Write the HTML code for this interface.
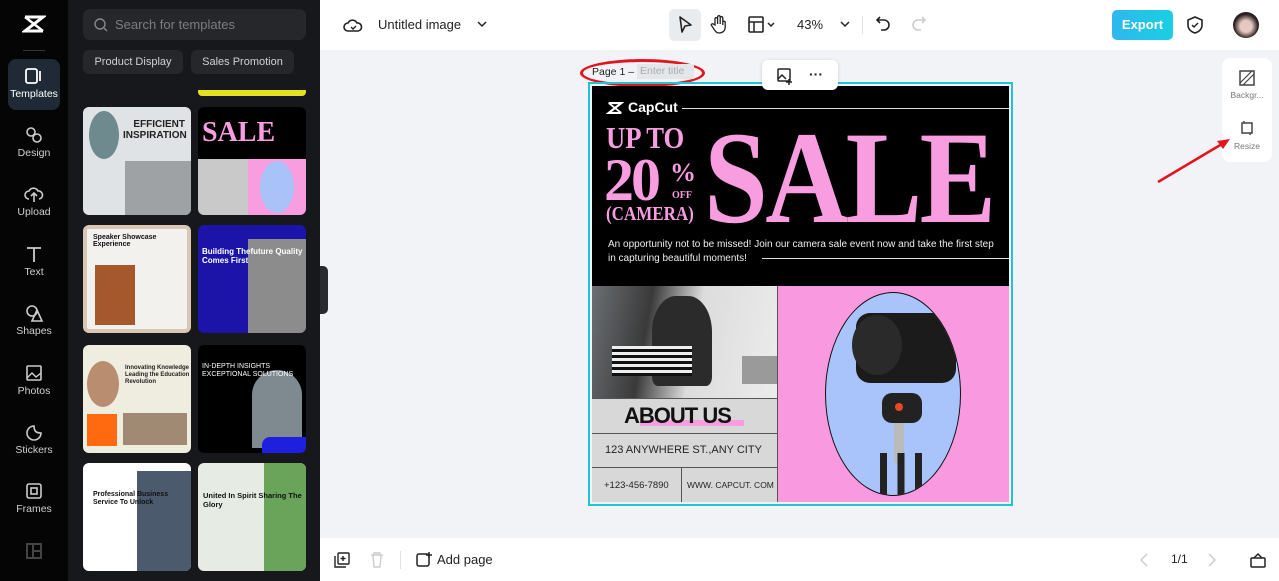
<!DOCTYPE html>
<html><head><meta charset="utf-8"><style>
*{margin:0;padding:0;box-sizing:border-box}
body{width:1279px;height:581px;overflow:hidden;position:relative;font-family:"Liberation Sans",sans-serif;background:#f1f3f6}
.abs{position:absolute}
.rail{left:0;top:0;width:68px;height:581px;background:#050505}
.ri{position:absolute;left:8px;width:52px;height:52px;color:#cfd0d3;font-size:10.5px;text-align:center}
.ri svg{display:block;margin:8px auto 3px}
.panel{left:68px;top:0;width:252px;height:581px;background:#17181b}
.th{position:absolute;width:108px;height:108px;border-radius:6px;overflow:hidden}
.top{left:320px;top:0;width:959px;height:50px;background:#fff}
.bot{left:320px;top:538px;width:959px;height:43px;background:#fff}
.serif{font-family:"Liberation Serif",serif;font-weight:bold;color:#f79de0}
</style></head><body>
<div class="abs rail">
  <svg class="abs" style="left:22px;top:14px" width="24" height="20" viewBox="0 0 24 20"><path d="M3 3h18L3 17h18" stroke="#fff" stroke-width="3" fill="none"/><path d="M3 3l18 14M21 3L3 17" stroke="#fff" stroke-width="2.4"/></svg>
  <div class="abs" style="left:23px;top:50px;width:22px;height:1px;background:#333"></div>
  <div class="ri" style="top:59px;height:51px;background:#1f2a36;border-radius:8px;color:#fff"><svg width="20" height="18"><rect x="2" y="2" width="11" height="14" rx="2" stroke="#fff" stroke-width="1.8" fill="none"/><path d="M16 4v10" stroke="#fff" stroke-width="1.8"/></svg>Templates</div>
  <div class="ri" style="top:118px"><svg width="20" height="18"><circle cx="7" cy="6" r="4" stroke="#ccc" stroke-width="1.6" fill="none"/><circle cx="13" cy="12" r="4" stroke="#ccc" stroke-width="1.6" fill="none"/></svg>Design</div>
  <div class="ri" style="top:177px"><svg width="20" height="18"><path d="M5 14a4 4 0 010-8 5 5 0 019 0 4 4 0 011 8M10 8v9M7 11l3-3 3 3" stroke="#ccc" stroke-width="1.6" fill="none"/></svg>Upload</div>
  <div class="ri" style="top:237px"><svg width="20" height="18"><path d="M3 3h14M10 3v14" stroke="#ccc" stroke-width="1.8" fill="none"/></svg>Text</div>
  <div class="ri" style="top:296px"><svg width="20" height="18"><circle cx="8" cy="7" r="5" stroke="#ccc" stroke-width="1.6" fill="none"/><path d="M13 6l5 11H8z" stroke="#ccc" stroke-width="1.6" fill="none"/></svg>Shapes</div>
  <div class="ri" style="top:356px"><svg width="20" height="18"><rect x="3" y="2" width="14" height="14" rx="1" stroke="#ccc" stroke-width="1.6" fill="none"/><path d="M3 14l5-5 4 4 5-4" stroke="#ccc" stroke-width="1.4" fill="none"/></svg>Photos</div>
  <div class="ri" style="top:415px"><svg width="20" height="18"><path d="M17 10A7 7 0 1110 3c0 5 2 7 7 7z" stroke="#ccc" stroke-width="1.6" fill="none"/></svg>Stickers</div>
  <div class="ri" style="top:474px"><svg width="20" height="18"><rect x="3" y="2" width="14" height="14" rx="2" stroke="#ccc" stroke-width="1.6" fill="none"/><rect x="7" y="6" width="6" height="6" stroke="#ccc" stroke-width="1.6" fill="none"/></svg>Frames</div>
  <svg class="abs" style="left:26px;top:543px" width="16" height="16"><rect x="1" y="1" width="14" height="14" stroke="#444" stroke-width="2" fill="none"/><path d="M7 1v14M7 8h8" stroke="#444" stroke-width="2"/></svg>
</div>
<div class="abs panel">
  <div class="abs" style="left:15px;top:9px;width:223px;height:31px;background:#26272b;border-radius:7px;color:#7c7e84;font-size:13px;line-height:31px;padding-left:32px">Search for templates
    <svg class="abs" style="left:11px;top:9px" width="14" height="14"><circle cx="6" cy="6" r="5" stroke="#888" stroke-width="1.4" fill="none"/><path d="M10 10l3 3" stroke="#888" stroke-width="1.4"/></svg></div>
  <div class="abs" style="left:15px;top:50px;width:100px;height:24px;background:#26272b;border-radius:6px;color:#d0d1d4;font-size:11px;line-height:24px;text-align:center">Product Display</div>
  <div class="abs" style="left:123px;top:50px;width:103px;height:24px;background:#26272b;border-radius:6px;color:#d0d1d4;font-size:11px;line-height:24px;text-align:center">Sales Promotion</div>
  <div class="abs" style="left:130px;top:90px;width:108px;height:6px;background:#e6e022;border-radius:0 0 4px 4px"></div>
  <div class="th" style="left:15px;top:107px;background:#dfe3e5"><div class="abs" style="left:6px;top:4px;width:30px;height:48px;border-radius:50%;background:#6f8a8f"></div><div class="abs" style="left:40px;top:12px;font-size:10px;font-weight:bold;color:#222;line-height:11px;text-align:right;width:62px">EFFICIENT INSPIRATION</div><div class="abs" style="left:42px;top:54px;width:66px;height:54px;background:#9ea2a4"></div></div>
  <div class="th" style="left:130px;top:107px;background:#000"><div class="abs serif" style="left:4px;top:10px;font-size:28px;color:#f79de0">SALE</div><div class="abs" style="left:0;top:52px;width:50px;height:56px;background:#c9c9c9"></div><div class="abs" style="left:50px;top:52px;width:58px;height:56px;background:#f79de0"></div><div class="abs" style="left:62px;top:54px;width:34px;height:52px;border-radius:50%;background:#a9c2f8"></div></div>
  <div class="th" style="left:15px;top:225px;background:#f3f1ee;border:4px solid #d9c6b3"><div class="abs" style="left:8px;top:36px;width:40px;height:60px;background:#a5582c"></div><div class="abs" style="left:6px;top:5px;font-size:7px;font-weight:bold;color:#111">Speaker Showcase Experience</div></div>
  <div class="th" style="left:130px;top:225px;background:#1c14a8"><div class="abs" style="left:50px;top:14px;width:58px;height:94px;background:#8c8c8c"></div><div class="abs" style="left:4px;top:22px;font-size:8px;font-weight:bold;color:#fff;line-height:9px">Building Thefuture Quality Comes First</div></div>
  <div class="th" style="left:15px;top:345px;background:#efece0"><div class="abs" style="left:4px;top:16px;width:32px;height:46px;border-radius:50%;background:#b88d70"></div><div class="abs" style="left:4px;top:69px;width:30px;height:32px;background:#ff6a10"></div><div class="abs" style="left:40px;top:68px;width:64px;height:32px;background:#a08a74"></div><div class="abs" style="left:42px;top:20px;font-size:6px;font-weight:bold;line-height:7px;color:#222">Innovating Knowledge Leading the Education Revolution</div></div>
  <div class="th" style="left:130px;top:345px;background:#000"><div class="abs" style="left:54px;top:25px;width:50px;height:78px;border-radius:25px 25px 0 0;background:#7f8a90"></div><div class="abs" style="left:4px;top:18px;font-size:7px;color:#fff;line-height:8px">IN-DEPTH INSIGHTS EXCEPTIONAL SOLUTIONS</div><div class="abs" style="left:64px;top:92px;width:44px;height:16px;background:#1f1fe0;border-radius:8px 0 0 0"></div></div>
  <div class="th" style="left:15px;top:463px;background:#fff"><div class="abs" style="left:54px;top:8px;width:54px;height:100px;background:#4b5a6c"></div><div class="abs" style="left:10px;top:28px;font-size:7px;font-weight:bold;line-height:8px;color:#111">Professional Business Service To Unlock</div></div>
  <div class="th" style="left:130px;top:463px;background:#e6ece4"><div class="abs" style="left:66px;top:0;width:42px;height:108px;background:#6aa35a"></div><div class="abs" style="left:5px;top:28px;font-size:7.5px;font-weight:bold;line-height:9px;color:#111">United In Spirit Sharing The Glory</div></div>
</div>
<div class="abs" style="left:320px;top:266px;width:8px;height:48px;background:#2a2b2f;border-radius:0 5px 5px 0"></div>
<div class="abs top">
  <svg class="abs" style="left:23px;top:16px" width="20" height="18"><path d="M5 15a4 4 0 010-8 5 5 0 019 0 4 4 0 011 8z" stroke="#222" stroke-width="1.6" fill="none"/><path d="M8 11l2 2 3-3" stroke="#222" stroke-width="1.4" fill="none"/></svg>
  <div class="abs" style="left:58px;top:17px;font-size:13px;color:#222">Untitled image</div>
  <svg class="abs" style="left:157px;top:20px" width="10" height="8"><path d="M1 2l4 4 4-4" stroke="#222" stroke-width="1.5" fill="none"/></svg>
  <div class="abs" style="left:349px;top:9px;width:32px;height:32px;background:#e9ecef;border-radius:5px"></div>
  <svg class="abs" style="left:356px;top:15px" width="18" height="20"><path d="M4 2l11 8-6 1-3 6z" stroke="#222" stroke-width="1.6" fill="none" stroke-linejoin="round"/></svg>
  <svg class="abs" style="left:390px;top:14px" width="18" height="20"><path d="M5 11V5a1.3 1.3 0 012.6 0v5V3a1.3 1.3 0 012.6 0v7V4a1.3 1.3 0 012.6 0v7-3a1.3 1.3 0 012.4 0v5c0 4-3 6-6 6s-4-2-6-5l-2-3a1.3 1.3 0 012-1z" stroke="#222" stroke-width="1.3" fill="none"/></svg>
  <svg class="abs" style="left:428px;top:16px" width="30" height="18"><rect x="1" y="1" width="14" height="15" rx="1" stroke="#222" stroke-width="1.6" fill="none"/><path d="M1 6h14M6 6v10M20 7l3 3 3-3" stroke="#222" stroke-width="1.5" fill="none"/></svg>
  <div class="abs" style="left:477px;top:17px;font-size:13px;color:#222">43%</div>
  <svg class="abs" style="left:520px;top:20px" width="10" height="8"><path d="M1 2l4 4 4-4" stroke="#222" stroke-width="1.5" fill="none"/></svg>
  <div class="abs" style="left:542px;top:16px;width:1px;height:18px;background:#e2e2e2"></div>
  <svg class="abs" style="left:555px;top:15px" width="16" height="18"><path d="M5 2L2 5l3 3M2 5h7a5 5 0 010 10H6" stroke="#222" stroke-width="1.6" fill="none"/></svg>
  <svg class="abs" style="left:591px;top:15px" width="16" height="18"><path d="M11 2l3 3-3 3M14 5H7a5 5 0 000 10h3" stroke="#ccc" stroke-width="1.6" fill="none"/></svg>
  <div class="abs" style="left:792px;top:10px;width:61px;height:30px;border-radius:5px;background:linear-gradient(90deg,#2fb7ef,#1bcfe1);color:#fff;font-size:13px;font-weight:bold;line-height:30px;text-align:center">Export</div>
  <svg class="abs" style="left:866px;top:15px" width="18" height="20"><path d="M9 2l7 3v5c0 4-3 7-7 8-4-1-7-4-7-8V5z" stroke="#222" stroke-width="1.6" fill="none"/><path d="M6 10l2 2 4-4" stroke="#222" stroke-width="1.5" fill="none"/></svg>
  <div class="abs" style="left:913px;top:12px;width:26px;height:26px;border-radius:50%;background:radial-gradient(circle at 50% 55%,#e6c8c0 30%,#2b2020 62%)"></div>
</div>
<!-- canvas -->
<div class="abs" style="left:580px;top:59px;width:125px;height:28px;border:3px solid #e2141c;border-radius:50%"></div>
<div class="abs" style="left:592px;top:66px;font-size:10.5px;color:#222">Page 1 –</div>
<div class="abs" style="left:637px;top:64px;width:57px;height:15px;background:#e4e7ea;font-size:10.5px;color:#a8abb0;line-height:15px;padding-left:3px">Enter title</div>
<div class="abs" style="left:588px;top:82px;width:425px;height:424px;border:2px solid #20c4d8"></div>
<div class="abs" style="left:592px;top:86px;width:417px;height:200px;background:#000;overflow:hidden">
  <svg class="abs" style="left:14px;top:15px" width="18" height="14" viewBox="0 0 24 20"><path d="M3 3h18L3 17h18" stroke="#fff" stroke-width="3" fill="none"/><path d="M3 3l18 14M21 3L3 17" stroke="#fff" stroke-width="2.4"/></svg>
  <div class="abs" style="left:36px;top:13px;font-size:14px;font-weight:bold;color:#fff">CapCut</div>
  <div class="abs" style="left:90px;top:22px;width:327px;height:1px;background:#ddd"></div>
  <div class="abs serif" style="left:14px;top:37px;font-size:31px;line-height:30px;transform:scaleX(.86);transform-origin:left">UP TO</div>
  <div class="abs serif" style="left:12px;top:64px;font-size:60px;line-height:60px;letter-spacing:-3px">20</div>
  <div class="abs serif" style="left:78px;top:72px;font-size:26px">%</div>
  <div class="abs serif" style="left:80px;top:104px;font-size:10px">OFF</div>
  <div class="abs serif" style="left:14px;top:117px;font-size:20px;transform:scaleX(.85);transform-origin:left">(CAMERA)</div>
  <div class="abs serif" style="left:112px;top:22px;font-size:132px;line-height:140px;letter-spacing:-3px;transform:scaleX(.87);transform-origin:left">SALE</div>
  <div class="abs" style="left:16px;top:152px;font-size:10px;line-height:14px;color:#eee;width:400px">An opportunity not to be missed! Join our camera sale event now and take the first step<br>in capturing beautiful moments!</div>
  <div class="abs" style="left:170px;top:172px;width:247px;height:1px;background:#ddd"></div>
</div>
<div class="abs" style="left:592px;top:286px;width:185px;height:112px;background:linear-gradient(100deg,#6b6f73 0%,#3a3a3a 30%,#dcdcdc 55%,#ececec 100%)">
  <div class="abs" style="left:60px;top:10px;width:60px;height:90px;background:#2b2b2b;border-radius:40% 40% 10% 10%"></div>
  <div class="abs" style="left:20px;top:60px;width:80px;height:30px;background:repeating-linear-gradient(0deg,#111 0 3px,#eee 3px 6px)"></div>
  <div class="abs" style="left:150px;top:70px;width:35px;height:28px;background:#9a9a9a"></div>
</div>
<div class="abs" style="left:592px;top:398px;width:185px;height:104px;background:#d8d8d8">
  <div class="abs" style="left:0;top:0;width:185px;height:1px;background:#555"></div>
  <div class="abs" style="left:48px;top:22px;width:104px;height:6px;background:#f79de0"></div>
  <div class="abs" style="left:32px;top:5px;font-size:22px;font-weight:bold;color:#111;letter-spacing:-1px">ABOUT US</div>
  <div class="abs" style="left:0;top:35px;width:185px;height:1px;background:#555"></div>
  <div class="abs" style="left:13px;top:46px;font-size:11px;color:#222;white-space:nowrap">123 ANYWHERE ST.,ANY CITY</div>
  <div class="abs" style="left:0;top:69px;width:185px;height:1px;background:#555"></div>
  <div class="abs" style="left:89px;top:69px;width:1px;height:35px;background:#555"></div>
  <div class="abs" style="left:12px;top:82px;font-size:9.5px;color:#222;white-space:nowrap">+123-456-7890</div>
  <div class="abs" style="left:95px;top:82px;font-size:8.5px;color:#222;white-space:nowrap">WWW. CAPCUT. COM</div>
</div>
<div class="abs" style="left:777px;top:286px;width:1px;height:216px;background:#555"></div>
<div class="abs" style="left:778px;top:286px;width:231px;height:216px;background:#f99ae0">
  <div class="abs" style="left:47px;top:6px;width:136px;height:204px;border-radius:50%;background:#a9c4fb;border:1px solid #111;overflow:hidden">
    <div class="abs" style="left:30px;top:20px;width:100px;height:70px;background:#1b1b1b;border-radius:14px"></div>
    <div class="abs" style="left:26px;top:22px;width:50px;height:60px;background:#2a2a2a;border-radius:50%"></div>
    <div class="abs" style="left:56px;top:100px;width:40px;height:30px;background:#222;border-radius:10px"></div>
    <div class="abs" style="left:69px;top:110px;width:8px;height:8px;background:#e74a20;border-radius:50%"></div>
    <div class="abs" style="left:68px;top:130px;width:10px;height:40px;background:#bbb"></div>
    <div class="abs" style="left:40px;top:160px;width:70px;height:44px;background:linear-gradient(90deg,transparent 20%,#222 20% 30%,transparent 30% 45%,#222 45% 55%,transparent 55% 70%,#222 70% 80%,transparent 80%)"></div>
  </div>
</div>
<div class="abs" style="left:762px;top:60px;width:76px;height:30px;background:#fff;border-radius:6px;box-shadow:0 1px 4px rgba(0,0,0,.15)">
  <svg class="abs" style="left:14px;top:7px" width="18" height="18"><rect x="2" y="2" width="12" height="12" rx="1" stroke="#222" stroke-width="1.5" fill="none"/><path d="M2 12l4-4 4 4M13 12v6M10 15h6" stroke="#222" stroke-width="1.5" fill="none"/></svg>
  <div class="abs" style="left:47px;top:6px;font-size:14px;font-weight:bold;color:#222">···</div>
</div>
<div class="abs" style="left:1222px;top:58px;width:50px;height:104px;background:#fff;border-radius:8px">
  <svg class="abs" style="left:17px;top:12px" width="16" height="16"><rect x="1" y="1" width="14" height="14" stroke="#444" stroke-width="1.5" fill="none"/><path d="M1 13L13 1M4 15L15 4" stroke="#444" stroke-width="1.2"/></svg>
  <div class="abs" style="left:0;top:32px;width:50px;text-align:center;font-size:8.5px;color:#777">Backgr...</div>
  <svg class="abs" style="left:17px;top:62px" width="16" height="16"><rect x="3" y="3" width="10" height="10" stroke="#444" stroke-width="1.5" fill="none"/><path d="M5 1v2M11 13v2" stroke="#444" stroke-width="1.5"/></svg>
  <div class="abs" style="left:0;top:83px;width:50px;text-align:center;font-size:8.5px;color:#777">Resize</div>
</div>
<svg class="abs" style="left:1155px;top:135px" width="80" height="50"><path d="M3 47L72 6" stroke="#e2141c" stroke-width="2.5"/><path d="M75 4l-13 2 6 8z" fill="#e2141c"/></svg>
<div class="abs bot">
  <svg class="abs" style="left:14px;top:14px" width="16" height="16"><rect x="4" y="1" width="11" height="11" rx="1" stroke="#222" stroke-width="1.4" fill="none"/><path d="M1 4v11h11M9 4v5M6.5 6.5h5" stroke="#222" stroke-width="1.4" fill="none"/></svg>
  <svg class="abs" style="left:50px;top:14px" width="14" height="16"><path d="M1 3h12M4 3V1h6v2M3 3l1 12h6l1-12" stroke="#ccc" stroke-width="1.4" fill="none"/></svg>
  <div class="abs" style="left:80px;top:13px;width:1px;height:18px;background:#e2e2e2"></div>
  <svg class="abs" style="left:96px;top:13px" width="17" height="17"><rect x="1" y="3" width="12" height="12" rx="2" stroke="#222" stroke-width="1.5" fill="none"/><path d="M13 1v6M10 4h6" stroke="#222" stroke-width="1.5"/></svg>
  <div class="abs" style="left:117px;top:14px;font-size:13px;color:#222">Add page</div>
  <svg class="abs" style="left:819px;top:15px" width="10" height="14"><path d="M8 1L2 7l6 6" stroke="#ccc" stroke-width="1.5" fill="none"/></svg>
  <div class="abs" style="left:851px;top:14px;font-size:12px;color:#222">1/1</div>
  <svg class="abs" style="left:887px;top:15px" width="10" height="14"><path d="M2 1l6 6-6 6" stroke="#ccc" stroke-width="1.5" fill="none"/></svg>
  <svg class="abs" style="left:930px;top:14px" width="16" height="16"><rect x="1" y="6" width="14" height="9" rx="1" stroke="#222" stroke-width="1.5" fill="none"/><path d="M4 6l4-4 4 4" stroke="#222" stroke-width="1.5" fill="none"/></svg>
</div>
</body></html>
